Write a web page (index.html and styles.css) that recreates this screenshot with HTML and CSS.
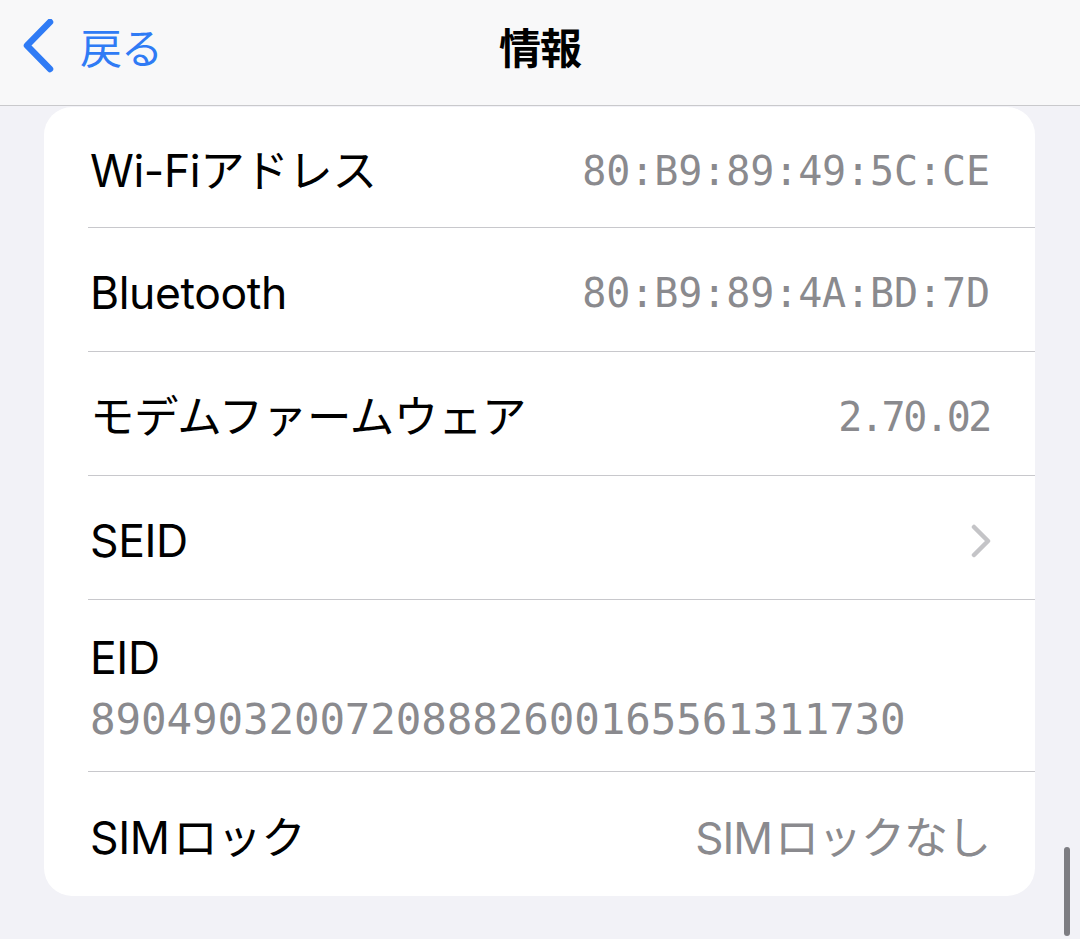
FILE: index.html
```html
<!DOCTYPE html>
<html lang="ja">
<head>
  <meta charset="UTF-8" />
  <meta name="viewport" content="width=device-width, initial-scale=1.0"/>
  <title>情報</title>
  <link rel="stylesheet" href="styles.css">
</head>
<body>

<div class="nav">
  <div class="nav-back">
    <svg class="back-chevron" width="34" height="54" viewBox="0 0 34 54">
      <path d="M28 3 L5 26.5 L28 50" fill="none" stroke="#2f7bf5" stroke-width="6.5" stroke-linecap="round" stroke-linejoin="round"/>
    </svg>
    <span class="back-label">戻る</span>
  </div>
  <div class="nav-title">情報</div>
  <div></div>
</div>

<div class="content">
  <div class="card">
    <div class="row row-first">
      <span class="label">Wi-Fiアドレス</span>
      <span class="value mono">80:B9:89:49:5C:CE</span>
    </div>
    <div class="row">
      <span class="label">Bluetooth</span>
      <span class="value mono">80:B9:89:4A:BD:7D</span>
    </div>
    <div class="row">
      <span class="label">モデムファームウェア</span>
      <span class="value mono tight">2.70.02</span>
    </div>
    <div class="row">
      <span class="label">SEID</span>
      <svg class="chevron" width="22" height="34" viewBox="0 0 22 34">
        <path d="M4 3 L18 17 L4 31" fill="none" stroke="#c4c4c7" stroke-width="4.5" stroke-linecap="round" stroke-linejoin="round"/>
      </svg>
    </div>
    <div class="row row-stack">
      <span class="label">EID</span>
      <span class="value mono eid">89049032007208882600165561311730</span>
    </div>
    <div class="row row-last">
      <span class="label">SIM&#8202;ロック</span>
      <span class="value">SIM&#8202;ロックなし</span>
    </div>
  </div>
</div>

<div class="scroll-indicator"></div>

</body>
</html>
```

FILE: styles.css
```css
* { box-sizing: border-box; margin: 0; padding: 0; }
body {
  font-family: 'Inter', 'Noto Sans CJK JP', sans-serif;
  background: #f2f2f7;
  color: #000;
  height: 939px;
  overflow: hidden;
  position: relative;
}
.nav {
  height: 106px;
  background: #f8f8f9;
  border-bottom: 1px solid #c9c9cc;
  display: grid;
  grid-template-columns: 1fr auto 1fr;
  align-items: center;
  padding-bottom: 14px;
}
.nav-back {
  display: flex;
  align-items: center;
  gap: 24px;
  padding-left: 22px;
}
.back-label {
  font-size: 42px;
  color: #2f7bf5;
  letter-spacing: -1px;
}
.nav-title {
  font-size: 42px;
  font-weight: 700;
  letter-spacing: -1px;
}
.content {
  padding: 1px 45px 0 44px;
}
.card {
  background: #fff;
  border-radius: 28px;
  overflow: hidden;
}
.row {
  height: 124px;
  margin-left: 44px;
  padding-right: 45px;
  padding-top: 7px;
  border-bottom: 1px solid #c8c8cc;
  display: flex;
  align-items: center;
  justify-content: space-between;
}
.row-first {
  height: 121px;
}
.row-last {
  border-bottom: none;
}
.row-stack {
  height: 172px;
  flex-direction: column;
  align-items: flex-start;
  justify-content: center;
  gap: 10px;
  padding-top: 4px;
}
.label {
  font-size: 44.5px;
  line-height: 54px;
  letter-spacing: -0.4px;
  padding-left: 2px;
}
.value {
  font-size: 44px;
  line-height: 54px;
  color: #8a8a8e;
  letter-spacing: -1px;
}
.mono {
  font-family: 'DejaVu Sans Mono', monospace;
  font-size: 40px;
  letter-spacing: -0.1px;
}
.tight {
  letter-spacing: -2.4px;
}
.eid {
  font-size: 42.5px;
  line-height: 50px;
  padding-left: 2px;
}
.chevron {
  margin-right: -2px;
}
.scroll-indicator {
  position: absolute;
  right: 10px;
  bottom: 3px;
  width: 6px;
  height: 89px;
  border-radius: 3px;
  background: #7d7d82;
}
```
